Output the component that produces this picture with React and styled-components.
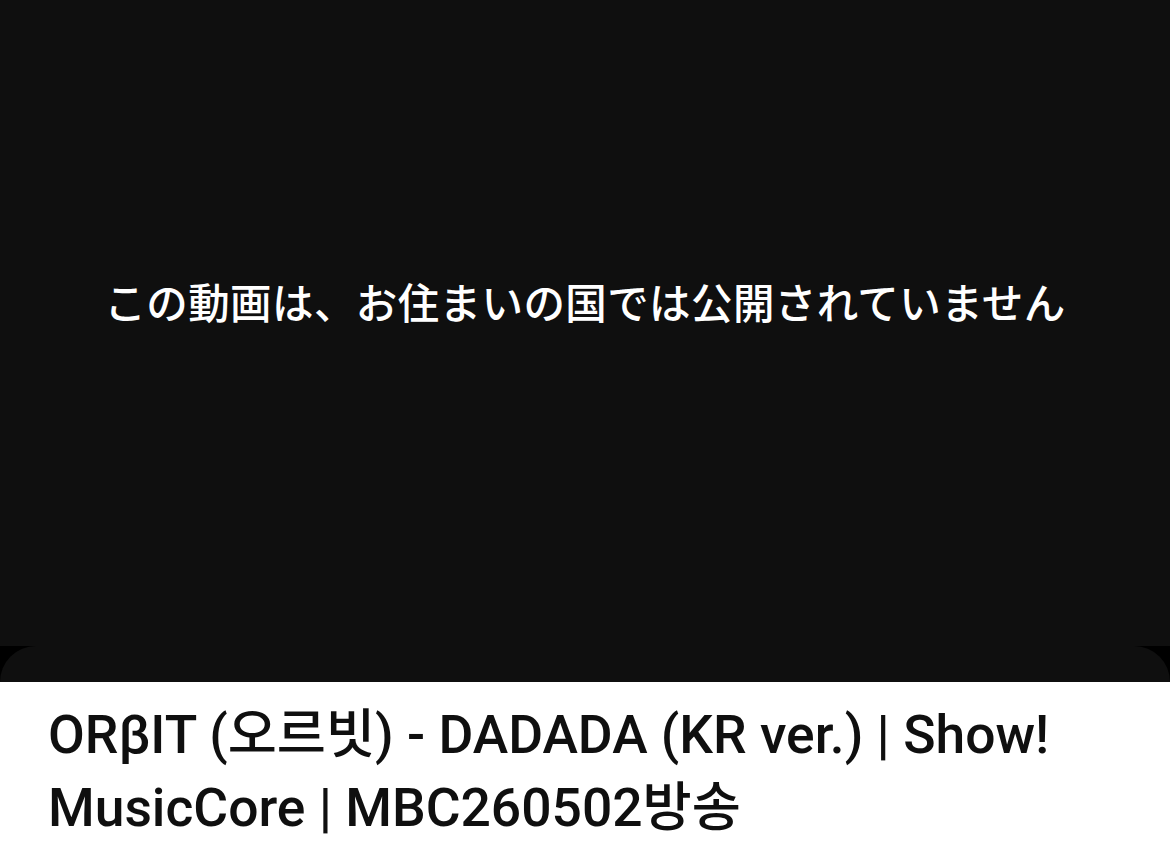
import styled, { createGlobalStyle } from 'styled-components'

const GlobalStyle = createGlobalStyle`
   html, body {
      margin: 0;
      padding: 0;
      background: #fff;
   }
   * {
      box-sizing: border-box;
   }
`

const Page = styled.div`
   width: 1170px;
   height: 854px;
   overflow: hidden;
   display: flex;
   flex-direction: column;
   background: #fff;
`

const Player = styled.div`
   height: 682px;
   display: flex;
   flex-direction: column;
   background: #000;
`

const Screen = styled.div`
   flex: 1;
   display: flex;
   align-items: center;
   justify-content: center;
   padding-bottom: 44px;
   background: #0f0f0f;
`

const Message = styled.div`
   color: #fff;
   font-family: 'Noto Sans CJK JP', 'Noto Sans', sans-serif;
   font-size: 41.5px;
   font-weight: 500;
   letter-spacing: 0.4px;
`

const Sheet = styled.div`
   height: 36px;
   background: #0f0f0f;
   border-radius: 36px 36px 0 0;
`

const Title = styled.h1`
   margin: 0;
   padding: 16px 48px 0;
   color: #0f0f0f;
   font-family: Roboto, 'Noto Sans CJK KR', sans-serif;
   font-size: 53.4px;
   font-weight: 500;
   line-height: 73px;
`

export default function App() {
   return (
      <Page>
         <GlobalStyle />
         <Player>
            <Screen>
               <Message>この動画は、お住まいの国では公開されていません</Message>
            </Screen>
            <Sheet />
         </Player>
         <Title>ORβIT (오르빗) - DADADA (KR ver.) | Show! MusicCore | MBC260502방송</Title>
      </Page>
   )
}
